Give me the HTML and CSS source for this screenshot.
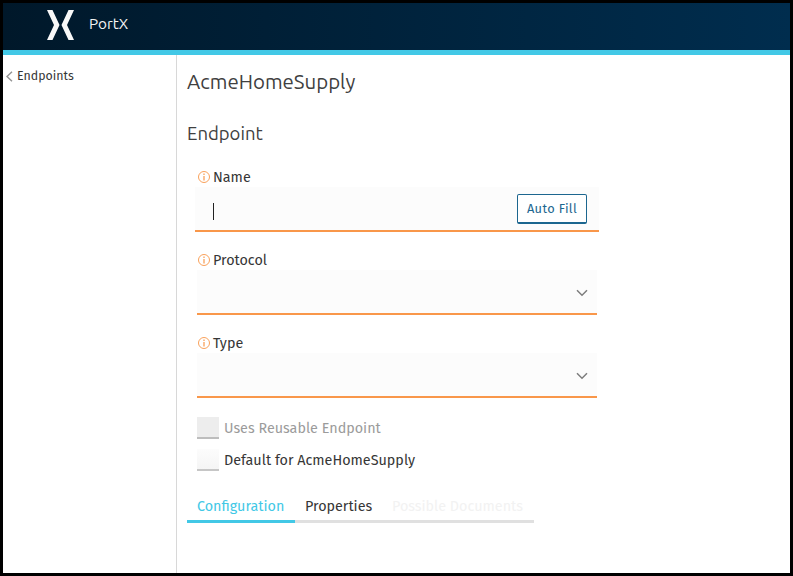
FILE: index.html
```html
<!DOCTYPE html>
<html lang="en">
<head>
<meta charset="utf-8">
<title>PortX</title>
<link rel="stylesheet" href="styles.css">
</head>
<body>
<header class="topbar">
  <svg class="logo" width="28" height="30" viewBox="0 0 28 30" fill="#f8f8f8"><path d="M0 0H5.500L12.500 15L5.500 30H0L7 15Z"/><path d="M27 0H21.500L14.500 15L21.500 30H27L20 15Z"/></svg>
  <span class="brand">PortX</span>
</header>
<div class="body">
  <nav class="sidebar">
    <a class="back"><svg width="7" height="11" viewBox="0 0 7 11" fill="none" stroke="#949494" stroke-width="1.400"><path d="M6 .7L1 5.500L6 10.300"/></svg><span>Endpoints</span></a>
  </nav>
  <main class="content">
    <h1>AcmeHomeSupply</h1>
    <h2>Endpoint</h2>
    <div class="field wide">
      <label class="label"><svg class="info" viewBox="0 0 12 12" fill="none" stroke="#f9a15b"><circle cx="6" cy="6" r="5.500"/><path d="M6 2.500V4M6 5V9.500" stroke-width="1.300"/></svg><span>Name</span></label>
      <div class="input"><span class="caret"></span><button class="autofill"><span>Auto Fill</span></button></div>
    </div>
    <div class="field">
      <label class="label"><svg class="info" viewBox="0 0 12 12" fill="none" stroke="#f9a15b"><circle cx="6" cy="6" r="5.500"/><path d="M6 2.500V4M6 5V9.500" stroke-width="1.300"/></svg><span>Protocol</span></label>
      <div class="input"><svg class="chevron" width="12" height="8" viewBox="0 0 12 8" fill="none" stroke="#7d7d7d" stroke-width="1.500"><path d="M1 1.200L6 6.200L11 1.200"/></svg></div>
    </div>
    <div class="field">
      <label class="label"><svg class="info" viewBox="0 0 12 12" fill="none" stroke="#f9a15b"><circle cx="6" cy="6" r="5.500"/><path d="M6 2.500V4M6 5V9.500" stroke-width="1.300"/></svg><span>Type</span></label>
      <div class="input"><svg class="chevron" width="12" height="8" viewBox="0 0 12 8" fill="none" stroke="#7d7d7d" stroke-width="1.500"><path d="M1 1.200L6 6.200L11 1.200"/></svg></div>
    </div>
    <div class="check disabled"><span class="box"></span><span class="check-text">Uses Reusable Endpoint</span></div>
    <div class="check"><span class="box"></span><span class="check-text">Default for AcmeHomeSupply</span></div>
    <div class="tabs">
      <div class="tab active">Configuration</div>
      <div class="tab tab-props">Properties</div>
      <div class="tab tab-docs">Possible Documents</div>
    </div>
  </main>
</div>
</body>
</html>
```
FILE: styles.css
```css
* { box-sizing: border-box; }
body {
  margin: 0;
  height: 576px;
  border: 3px solid #000;
  background: #fff;
  color: #363636;
  font: 14.35px/20px "Fira Sans", "Noto Sans", sans-serif;
  display: flex;
  flex-direction: column;
  overflow: hidden;
  white-space: nowrap;
}
.topbar {
  height: 52px;
  flex: none;
  display: flex;
  align-items: flex-start;
  padding: 7px 0 0 44px;
  background: linear-gradient(90deg, #00182a, #002d4e);
  border-bottom: 5px solid #42c8e6;
}
.brand {
  margin: 4px 0 0 14px;
  color: #f4f4f4;
  font: 15.3px/20px Ubuntu, "Noto Sans", sans-serif;
}
.body { flex: 1; display: flex; }
.sidebar {
  width: 174px;
  flex: none;
  border-right: 1px solid #d8d8d8;
  padding: 11px 0 0 3px;
}
.back { display: flex; align-items: center; gap: 4px; font-size: 12.4px; }
.content { flex: 1; padding: 0 0 0 10px; }
h1, h2 {
  margin: 0;
  font-family: Ubuntu, "Noto Sans", sans-serif;
  font-weight: 400;
  color: #404040;
}
h1 { font-size: 20.45px; line-height: 28px; padding-top: 13px; }
h2 { font-size: 18.5px; line-height: 26px; margin-top: 24px; }
.field { width: 400px; margin: 0 0 18px 10px; }
.field.wide { width: 404px; margin: 21px 0 18px 8px; }
.label { display: flex; align-items: center; height: 20px; gap: 3px; padding-left: 1px; }
.label span { padding-top: 1px; }
.wide .label { padding-left: 3px; }
.info { width: 12px; height: 12px; }
.input {
  height: 45px;
  background: #fcfcfc;
  border-bottom: 2px solid #f9974a;
  display: flex;
  align-items: center;
  justify-content: space-between;
  padding: 2px 9px 0 18px;
}
.wide .input { padding: 0 12px 0 18px; }
.caret { width: 1px; height: 17px; background: #222; margin-top: 5px; }
.chevron { margin-left: auto; }
.autofill {
  width: 70px;
  height: 30px;
  padding: 1px 0 0;
  border: 1px solid #1c668f;
  border-bottom-width: 2px;
  border-radius: 2px;
  background: #fff;
  color: #1c668f;
  font: 12.8px/20px "Fira Sans", "Noto Sans", sans-serif;
  letter-spacing: .35px;
}
.check { height: 22px; display: flex; align-items: center; gap: 5px; margin: 0 0 10px 10px; }
.field + .check { margin-top: 19px; }
.check-text { padding-top: 2px; }
.box {
  width: 22px;
  height: 22px;
  background: linear-gradient(#fcfcfc, #f5f5f5);
  border-bottom: 2px solid #c6c6c6;
}
.disabled { color: #9b9b9b; }
.disabled .box { background: #ededed; border-color: #bdbdbd; }
.tabs { display: flex; width: 347px; margin-top: 22px; }
.tab { height: 30px; padding: 4px 10px 0; border-bottom: 3px solid #e0e0e0; }
.tab.active { width: 108px; color: #42c8e6; border-color: #42c8e6; }
.tab-props { width: 87px; }
.tab-docs { flex: 1; color: #f2f2f2; }
```
